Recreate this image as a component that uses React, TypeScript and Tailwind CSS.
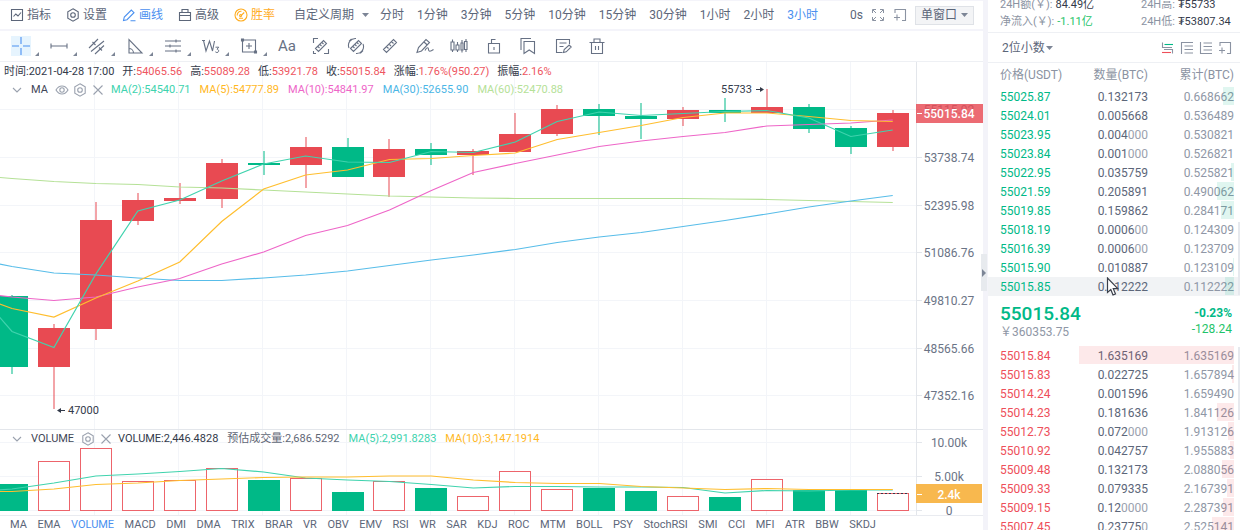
import { useState } from 'react'
import type { ReactNode } from 'react'
import clsx from 'clsx'

type Candle = {
  up: boolean
  top: number
  bottom: number
  high: number
  low: number
  vol: number
}

// [up, body top, body bottom, wick top, wick bottom, volume top]
const RAW: [number, number, number, number, number, number][] = [
  [0, 296, 367, 295, 374, 484],
  [1, 328, 367, 324, 409, 462],
  [1, 220, 329, 202, 340, 449],
  [1, 200, 221, 193, 225, 482],
  [1, 198, 201, 183, 204, 481],
  [1, 163, 199, 159, 208, 469],
  [0, 163, 165, 151, 175, 480],
  [1, 147, 165, 137, 188, 479],
  [0, 147, 177, 138, 177, 492],
  [1, 149, 177, 139, 197, 482],
  [0, 149, 155, 143, 165, 488],
  [1, 151, 155, 149, 175, 497],
  [1, 134, 152, 113, 152, 472],
  [1, 109, 134, 105, 136, 490],
  [0, 109, 116, 104, 135, 488],
  [0, 116, 119, 103, 139, 491],
  [1, 110, 119, 107, 126, 497],
  [0, 110, 113, 98, 122, 497],
  [1, 107, 113, 89, 113, 480],
  [0, 107, 129, 104, 133, 490],
  [0, 128, 147, 126, 154, 490],
  [1, 113, 147, 110, 151, 494],
]

const CANDLES: Candle[] = RAW.map(([up, top, bottom, high, low, vol]) => ({
  up: up === 1,
  top,
  bottom,
  high,
  low,
  vol,
}))

const STEP = 41.94
const FIRST_X = 12
const BODY = 32
const VOL_BASE = 510.5
const RED = '#e84a52'
const GREEN = '#00b987'

const centerOf = (i: number) => FIRST_X + i * STEP

// every series starts one bar before the visible range
const LINES: { color: string; ys: number[] }[] = [
  { color: '#b5e197', ys: [175, 178.5, 181.5, 183.5, 184.5, 187, 188, 190, 192, 194, 196, 197, 198, 198.5, 198.5, 198.5, 198.5, 198.5, 199, 199.5, 200.5, 201.5, 202.5] },
  { color: '#58bde9', ys: [258, 266.5, 273, 275, 278, 280.5, 280.5, 278, 275, 271, 265.5, 260, 255, 249.5, 242.5, 237, 232.5, 226.5, 220.5, 214, 207, 201, 195.5] },
  { color: '#ee66c8', ys: [292, 297, 300.5, 297, 287, 278.5, 264, 252, 235.5, 225.5, 210, 190.5, 172.5, 163.5, 155, 146.5, 141, 136.5, 132.5, 126, 124.5, 123, 120] },
  { color: '#ffbe2e', ys: [293, 308.5, 317, 298, 281, 262, 221.5, 189, 175, 170, 159.5, 158.5, 155.5, 153, 139.5, 132.5, 125.5, 117.5, 113, 113, 116.5, 120.5, 121.5] },
  { color: '#40d3ae', ys: [283, 331.5, 347.5, 274, 211, 200, 181, 164, 156, 162, 162.5, 151.5, 152.5, 142, 121.5, 112, 115.5, 113.5, 111.5, 110.5, 118, 136.5, 130] },
  { color: '#40d3ae', ys: [492, 489, 483, 476, 474, 471.5, 468.5, 472, 478, 480, 481.5, 484.5, 488, 486.5, 486.5, 487, 487, 487.5, 493, 490.5, 491, 490, 490] },
  { color: '#ffbe2e', ys: [491.5, 491.5, 489, 484.5, 483, 480.5, 479, 477.5, 477, 477, 476, 476, 480, 482.5, 483.5, 483.5, 486.5, 488, 489.5, 488.5, 489.5, 489.5, 489.5] },
]

const AXIS: [string, number][] = [
  ['55115.92', 110],
  ['53738.74', 158],
  ['52395.98', 206],
  ['51086.76', 253],
  ['49810.27', 301],
  ['48565.66', 349],
  ['47352.16', 396],
  ['10.00k', 443],
  ['5.00k', 477],
  ['0', 511],
]

const GRID_X = [94.5, 178.5, 262.5, 346.5, 430.5, 514.5, 598.5, 682.5, 766.5, 850.5]

const PERIODS = ['分时', '1分钟', '3分钟', '5分钟', '10分钟', '15分钟', '30分钟', '1小时', '2小时', '3小时']

const INDICATORS = [
  'MA', 'EMA', 'VOLUME', 'MACD', 'DMI', 'DMA', 'TRIX', 'BRAR', 'VR', 'OBV', 'EMV', 'RSI', 'WR', 'SAR',
  'KDJ', 'ROC', 'MTM', 'BOLL', 'PSY', 'StochRSI', 'SMI', 'CCI', 'MFI', 'ATR', 'BBW', 'SKDJ',
]

type Order = { price: string; qty: string; total: string; depth: number; hover?: boolean }

const ASKS: Order[] = [
  { price: '55025.87', qty: '0.132173', total: '0.668662', depth: 11 },
  { price: '55024.01', qty: '0.005668', total: '0.536489', depth: 0 },
  { price: '55023.95', qty: '0.004000', total: '0.530821', depth: 0 },
  { price: '55023.84', qty: '0.001000', total: '0.526821', depth: 0 },
  { price: '55022.95', qty: '0.035759', total: '0.525821', depth: 3 },
  { price: '55021.59', qty: '0.205891', total: '0.490062', depth: 17 },
  { price: '55019.85', qty: '0.159862', total: '0.284171', depth: 13 },
  { price: '55018.19', qty: '0.000600', total: '0.124309', depth: 0 },
  { price: '55016.39', qty: '0.000600', total: '0.123709', depth: 0 },
  { price: '55015.90', qty: '0.010887', total: '0.123109', depth: 1 },
  { price: '55015.85', qty: '0.112222', total: '0.112222', depth: 9, hover: true },
]

const BIDS: Order[] = [
  { price: '55015.84', qty: '1.635169', total: '1.635169', depth: 155 },
  { price: '55015.83', qty: '0.022725', total: '1.657894', depth: 2 },
  { price: '55014.24', qty: '0.001596', total: '1.659490', depth: 0 },
  { price: '55014.23', qty: '0.181636', total: '1.841126', depth: 17 },
  { price: '55012.73', qty: '0.072000', total: '1.913126', depth: 6 },
  { price: '55010.92', qty: '0.042757', total: '1.955883', depth: 4 },
  { price: '55009.48', qty: '0.132173', total: '2.088056', depth: 12 },
  { price: '55009.33', qty: '0.079335', total: '2.167391', depth: 7 },
  { price: '55009.15', qty: '0.120000', total: '2.287391', depth: 11 },
  { price: '55007.45', qty: '0.237750', total: '2.525141', depth: 22 },
]

function Icon({ size = 18, children }: { size?: number; children: ReactNode }) {
  return (
    <svg
      width={size}
      height={size}
      viewBox={`0 0 ${size} ${size}`}
      fill="none"
      stroke="currentColor"
      strokeWidth={1.1}
      className="shrink-0"
      aria-hidden
    >
      {children}
    </svg>
  )
}

const HEXAGON = 'M7 .8 12.2 3.8v6.4L7 13.2 1.8 10.2V3.8Z'

const MENU: { label: string; tone?: string; icon: ReactNode }[] = [
  { label: '指标', icon: <path d="M1.500 1.500h11v11h-11ZM3.500 8.500l2.300-2.500 2.200 2L11 4.500" /> },
  {
    label: '设置',
    icon: (
      <>
        <path d={HEXAGON} />
        <circle cx={7} cy={7} r={2.3} />
      </>
    ),
  },
  { label: '画线', tone: 'text-[#4a90f0]', icon: <path d="M1.500 12.500 2.300 9 9.300 2l2.700 2.700-7 7ZM8.500 12.700h5" /> },
  { label: '高级', icon: <path d="M1.500 4.500h11v8h-11ZM4 4.500v-3h6v3M1.500 7.500h11" /> },
  {
    label: '胜率',
    tone: 'text-[#ffac1f]',
    icon: (
      <>
        <circle cx={7} cy={7} r={6} />
        <path d="M3.200 7.500A3.800 3.800 0 0 1 7.500 3.300M7.300 7.300 10.200 4.500M5 10.300h4" />
        <circle cx={6.600} cy={7.600} r={1} />
      </>
    ),
  },
]

const SHAPES: { label: string; icon: ReactNode }[] = [
  { label: '十字', icon: <path d="M9 0v7M9 11v7M0 9h7M11 9h7" /> },
  { label: '线段', icon: <path d="M1 9h16M1 6.500v5M17 6.500v5" /> },
  { label: '平行线', icon: <path d="M1 11 10 2M3 14.500 16 4M7 17l9-8.500M4.500 5l3 3M11 10.500l3 3" /> },
  { label: '三角', icon: <path d="M3 2.500v13.500h13ZM3 11.500c2.500 0 4.500 2 4.500 4.500" /> },
  { label: '水平线', icon: <path d="M1 4h16M1 9h16M1 14h16M12 2.500v3M6 7.500v3M12 12.500v3" /> },
  {
    label: '波浪',
    icon: (
      <>
        <path d="M1.500 3.500l2.500 10.500 3.500-10 3 10 2-10M0 3.500h3" />
        <path d="M13.500 10.200h3.300l-1.800 2c2 0 2.500 3.300-.1 3.300-.8 0-1.300-.3-1.600-.8" strokeWidth={1} />
      </>
    ),
  },
  { label: '矩形', icon: <path d="M2.500 3h13v12h-13ZM9 6v6M6 9h6M1.500 2h2v2h-2ZM14.500 14h2v2h-2Z" /> },
]

const RULER = 'M3.500 11.500 11.500 3.500l3 3-8 8ZM6 9.500l1.500 1.500M8 7.500l1.500 1.500M10 5.500l1.500 1.500'

const TOOLS: { label: string; icon: ReactNode }[] = [
  { label: '测量', icon: <path d={`${RULER}M1.500 6V1.500H6M12 16.500h4.500V12M1.500 14v2.500H4`} /> },
  {
    label: '圆形测量',
    icon: <path d={`${RULER}M2 11C0 6 4 1 9 1.500M16 7c2 5-2 10-7 9.500M2 4.500 4.500 2M13.500 16l2.500-2.500`} />,
  },
  { label: '尺子', icon: <path d="M2.500 12.500 12.500 2.500l3 3-10 10ZM5.500 9.500l2 2M8 7l2 2M10.500 4.500l2 2" /> },
  { label: '画笔', icon: <path d="M1 15.500l1.500-5 7.500-8 3.500 3-8 8.500ZM8 5l3.300 3M9 13.500c2-4 3.500-3 3.500-1s1.500 2.500 5 0" /> },
  {
    label: 'K线',
    icon: (
      <path d="M1 5h3v8H1ZM2.500 2.500V5M2.500 13v2M6 8h3v5H6ZM7.500 5v3M7.500 13v2M11 6h2v7h-2ZM12 3v3M12 13v2.500M14.500 4.500h2.500v8h-2.500ZM16 2v2.500M16 12.500V15" />
    ),
  },
  { label: '锁定', icon: <path d="M3.500 6.500h11v9.500h-11ZM6.500 6.500v-4h4M9 10v3" /> },
  { label: '收藏', icon: <path d="M5 4.500h10.500v12L10.200 13 5 16.500ZM2 13V1.500h10" /> },
  { label: '笔记', icon: <path d="M15.500 7V2.500h-13v13h6M5.500 6h7M5.500 9.500h4M9.500 15.500l.7-3 5-4.500 2 2-5 4.800Z" /> },
  { label: '删除', icon: <path d="M1.500 5.500h15M3.500 5.500v11h11v-11M6 5V2h6v3M7.500 9v4M10.500 9v4" /> },
]

function Caret() {
  return (
    <svg width={7} height={4} viewBox="0 0 7 4" className="pointer-events-none shrink-0" aria-hidden>
      <path d="M0 0h7L3.500 4Z" fill="#7c8596" />
    </svg>
  )
}

function MenuBar() {
  const [period, setPeriod] = useState('3小时')

  return (
    <div className="flex h-[31px] items-center border-t border-b-2 border-[#f4f4fa] pr-[9px] pl-[10px] text-xs">
      <div className="flex gap-[15px]">
        {MENU.map((m) => (
          <button key={m.label} type="button" className={clsx('flex items-center gap-[3px]', m.tone)}>
            <Icon size={14}>{m.icon}</Icon>
            {m.label}
          </button>
        ))}
      </div>
      <label className="ml-[19px] flex items-center gap-[7px]">
        <select aria-label="周期" className="appearance-none outline-none">
          <option>自定义周期</option>
        </select>
        <Caret />
      </label>
      <div className="ml-[11px] flex gap-[13px]">
        {PERIODS.map((p) => (
          <button
            key={p}
            type="button"
            onClick={() => setPeriod(p)}
            className={clsx(p === period && 'text-[#4a90f0]')}
          >
            {p}
          </button>
        ))}
      </div>
      <div className="ml-auto flex items-center gap-2">
        <span>0s</span>
        <button type="button" aria-label="全屏" className="text-[#8b93a2]">
          <Icon size={14}>
            <path d="M1.500 5V1.500H5M2 2l3 3M9 1.500h3.500V5M12 2 9 5M1.500 9v3.500H5M2 12l3-3M12.500 9v3.500H9M12 12 9 9" strokeWidth={1} />
          </Icon>
        </button>
        <button type="button" aria-label="新窗口" className="text-[#8b93a2]">
          <Icon size={14}>
            <path d="M2 5V1.500h10.500v11H9M1 9.500h6M4 6.500v6" />
          </Icon>
        </button>
        <label className="flex h-[19px] items-center gap-[3px] border border-[#dfe2e7] bg-[#f3f4f6] px-[5px]">
          <select aria-label="窗口" className="appearance-none outline-none">
            <option>单窗口</option>
          </select>
          <Caret />
        </label>
      </div>
    </div>
  )
}

function DrawBar() {
  return (
    <div className="flex h-[31px] items-center border-b border-[#eef0f4] pl-[11px] text-[#677184]">
      {SHAPES.map((s, i) => (
        <button key={s.label} type="button" aria-label={s.label} className="flex w-[38px] items-end gap-1">
          <span
            className={clsx(
              'flex size-5 items-center justify-center',
              i === 0 && 'bg-[#e6f4fe] text-[#4a90f0]',
            )}
          >
            <Icon>{s.icon}</Icon>
          </span>
          <svg width={4} height={4} viewBox="0 0 4 4" aria-hidden>
            <path d="M4 0v4H0Z" fill="#7c8596" />
          </svg>
        </button>
      ))}
      <div className="flex w-[330px] items-center justify-between">
        <button type="button" className="w-5 text-center text-[15px]">
          Aa
        </button>
        {TOOLS.map((t) => (
          <button key={t.label} type="button" aria-label={t.label} className="flex size-5 items-center justify-center">
            <Icon>{t.icon}</Icon>
          </button>
        ))}
      </div>
    </div>
  )
}

function LegendButtons({ name, eye = false }: { name: string; eye?: boolean }) {
  return (
    <div className={clsx('flex items-center text-[#9aa1ae]', eye ? 'w-[91px]' : 'w-[98px]')}>
      <button type="button" aria-label="收起" className="mr-2">
        <Icon size={12}>
          <path d="M2 4l4 4 4-4" />
        </Icon>
      </button>
      <span className="mr-[7px] text-[#3f4656]">{name}</span>
      {eye && (
        <button type="button" aria-label="显示" className="mr-1">
          <Icon size={14}>
            <path d="M1 7c3-5.300 9-5.300 12 0-3 5.300-9 5.300-12 0Z" />
            <circle cx={7} cy={7} r={2.2} />
          </Icon>
        </button>
      )}
      <button type="button" aria-label="设置" className="mr-1">
        <Icon size={14}>
          <path d={HEXAGON} />
          <circle cx={7} cy={7} r={2.3} />
        </Icon>
      </button>
      <button type="button" aria-label="关闭">
        <Icon size={14}>
          <path d="M2.500 2.500l9 9M11.500 2.500l-9 9" />
        </Icon>
      </button>
    </div>
  )
}

function Quote({ label, value }: { label: string; value: string }) {
  return (
    <span>
      {label}:<span className="text-[#ee5560]">{value}</span>
    </span>
  )
}

function PriceLegend() {
  return (
    <div className="absolute inset-x-0 top-0 pt-px text-[11px] whitespace-nowrap text-[#333a4a]">
      <div className="flex h-[18px] items-center gap-2 pl-1">
        <span>时间:2021-04-28 17:00</span>
        <Quote label="开" value="54065.56" />
        <Quote label="高" value="55089.28" />
        <Quote label="低" value="53921.78" />
        <Quote label="收" value="55015.84" />
        <Quote label="涨幅" value="1.76%(950.27)" />
        <Quote label="振幅" value="2.16%" />
      </div>
      <div className="flex h-[18px] items-center gap-[9px] pl-[11px]">
        <LegendButtons name="MA" eye />
        <span className="text-[#40d3ae]">MA(2):54540.71</span>
        <span className="text-[#ffb81f]">MA(5):54777.89</span>
        <span className="text-[#ee66c8]">MA(10):54841.97</span>
        <span className="text-[#4bb6e6]">MA(30):52655.90</span>
        <span className="text-[#b5e197]">MA(60):52470.88</span>
      </div>
    </div>
  )
}

function VolumeLegend() {
  return (
    <div className="absolute inset-x-0 top-[368px] flex h-[18px] items-center gap-[9px] pl-[11px] text-[11px] whitespace-nowrap text-[#333a4a]">
      <LegendButtons name="VOLUME" />
      <span>VOLUME:2,446.4828</span>
      <span className="text-[#5f6776]">预估成交量:2,686.5292</span>
      <span className="text-[#40d3ae]">MA(5):2,991.8283</span>
      <span className="text-[#ffb81f]">MA(10):3,147.1914</span>
    </div>
  )
}

function Chart() {
  return (
    <svg
      viewBox="0 62 983 453"
      preserveAspectRatio="xMaxYMin slice"
      className="block h-[453px] w-full text-xs"
      role="img"
      aria-label="K线图"
    >
      <g stroke="#f3f5f9">
        {GRID_X.map((x) => (
          <line key={x} x1={x} x2={x} y1={62} y2={515} />
        ))}
        {AXIS.map(([label, y]) => (
          <line key={label} x1={0} x2={916} y1={y - 0.5} y2={y - 0.5} />
        ))}
      </g>
      <g stroke="#e3e6eb">
        <path d="M0 429.500h983M916.500 62v453" />
        {AXIS.map(([label, y]) => (
          <line key={label} x1={917} x2={922} y1={y - 0.5} y2={y - 0.5} />
        ))}
      </g>

      {CANDLES.map((c, i) => {
        const color = c.up ? RED : GREEN
        const x = Math.round(centerOf(i) - BODY / 2)
        return (
          <g key={i}>
            <rect x={x + 15.5} y={c.high} width={1} height={c.low - c.high} fill={color} />
            <rect x={x} y={c.top} width={BODY} height={c.bottom - c.top} fill={color} />
            {c.up ? (
              <rect
                x={x + 0.5}
                y={c.vol - 0.5}
                width={BODY - 1}
                height={VOL_BASE - c.vol + 0.5}
                fill="#fff"
                stroke="#ed646b"
              />
            ) : (
              <rect x={x} y={c.vol} width={BODY} height={VOL_BASE - c.vol + 0.5} fill={color} />
            )}
          </g>
        )
      })}
      <path d="M877 493.500h31" stroke="#333a4a" strokeDasharray="2 2" />

      {LINES.map((line, n) => (
        <polyline
          key={n}
          points={line.ys.map((y, i) => `${centerOf(i - 1)},${y}`).join(' ')}
          fill="none"
          stroke={line.color}
          strokeWidth={1.2}
        />
      ))}

      <g fill="#333a4a" className="text-[11px]">
        <text x={752} y={93} textAnchor="end">
          55733
        </text>
        <text x={68} y={414}>
          47000
        </text>
      </g>
      <g stroke="#333a4a" fill="#333a4a">
        <path d="M756 89.500h5" />
        <path d="M760 87v5l4-2.500Z" stroke="none" />
        <path d="M60 410.500h5" />
        <path d="M61 408v5l-4-2.500Z" stroke="none" />
      </g>

      <g fill="#6b7486" textAnchor="middle">
        {AXIS.map(([label, y]) => (
          <text key={label} x={949} y={y + 4}>
            {label}
          </text>
        ))}
      </g>
      <rect x={916} y={104} width={67} height={19} fill="#e84a54" opacity={0.82} />
      <rect x={916} y={484} width={66} height={19} fill="#f8b84e" />
      <path d="M917 113.500h5M917 494.500h5" stroke="#fff" />
      <g fill="#fff" textAnchor="middle" className="font-medium">
        <text x={949} y={118}>
          55015.84
        </text>
        <text x={949} y={499}>
          2.4k
        </text>
      </g>
    </svg>
  )
}

function IndicatorTabs() {
  const [active, setActive] = useState('VOLUME')

  return (
    <div className="border-t border-[#e9ebf0] px-[10px]">
      <div className="flex h-[19px] max-w-[866px] items-center justify-between text-[11px]">
        {INDICATORS.map((name) => (
          <button
            key={name}
            type="button"
            onClick={() => setActive(name)}
            className={clsx(name === active && 'text-[#4a90f0]')}
          >
            {name}
          </button>
        ))}
      </div>
    </div>
  )
}

function Quantity({ value }: { value: string }) {
  const head = value.replace(/0+$/, '')
  return (
    <>
      {head}
      <span className="text-[#9aa1ae]">{value.slice(head.length)}</span>
    </>
  )
}

function OrderTable({ label, orders, side, header = false }: {
  label: string
  orders: Order[]
  side: 'ask' | 'bid'
  header?: boolean
}) {
  return (
    <table aria-label={label} className="w-full table-fixed">
      <colgroup>
        <col className="w-[80px]" />
        <col className="w-[80px]" />
        <col />
      </colgroup>
      {header && (
        <thead className="text-[#8b93a2]">
          <tr className="h-6">
            <th className="pl-3 text-left font-normal whitespace-nowrap">价格(USDT)</th>
            <th className="text-right font-normal">数量(BTC)</th>
            <th className="pr-[6px] text-right font-normal">累计(BTC)</th>
          </tr>
        </thead>
      )}
      <tbody>
        {orders.map((o) => (
          <tr key={o.price} className={clsx('relative h-[19px]', o.hover && 'bg-[#f1f3f5]')}>
            <td className={clsx('pl-3', side === 'ask' ? 'text-[#00b987]' : 'text-[#ee4f5a]')}>{o.price}</td>
            <td className="text-right text-[#5c6679]">
              <Quantity value={o.qty} />
            </td>
            <td className="pr-[6px] text-right text-[#8f97a6]">
              {o.total}
              <span
                className={clsx(
                  'absolute top-0 right-[6px] h-[18px]',
                  side === 'ask' ? 'bg-[#00b987]/12' : 'bg-[#f04a54]/12',
                )}
                style={{ width: o.depth }}
              />
            </td>
          </tr>
        ))}
      </tbody>
    </table>
  )
}

function Stat({ label, value, tone = 'text-[#333a4a]' }: { label: string; value: string; tone?: string }) {
  return (
    <div className="flex gap-[3px]">
      <dt className="text-[#8b93a2]">{label}:</dt>
      <dd className={tone}>{value}</dd>
    </div>
  )
}

function OrderBook() {
  return (
    <aside className="relative w-[252px] shrink-0 text-xs leading-4">
      <div className="h-[33px] overflow-hidden border-b border-[#eef0f4] text-[11px] leading-[17px]">
        <dl className="-mt-1 grid grid-cols-[141px_1fr] pl-3 whitespace-nowrap">
          <Stat label="24H额(￥)" value="84.49亿" />
          <Stat label="24H高" value="₮55733" />
          <Stat label="净流入(￥)" value="-1.11亿" tone="text-[#1fc46a]" />
          <Stat label="24H低" value="₮53807.34" />
        </dl>
      </div>
      <div className="flex h-[30px] items-center justify-between border-b border-[#eef0f4] pr-2 pl-[14px]">
        <label className="flex items-center gap-px">
          <select aria-label="小数位" className="appearance-none outline-none">
            <option>2位小数</option>
          </select>
          <Caret />
        </label>
        <div className="flex gap-[5px] text-[#8b93a2]">
          <button type="button" aria-label="买卖盘">
            <Icon size={14}>
              <path d="M1.500 1.500v5H11M3 8.500h8.500v4" />
              <path d="M3.500 3.500H12" stroke="#00b987" />
              <path d="M1 11.500h9" stroke="#ee4f5a" />
            </Icon>
          </button>
          <button type="button" aria-label="买盘">
            <Icon size={14}>
              <path d="M1.500 13V1.500H13M4.500 5H13M4.500 8.500H13M4.500 12H13" />
            </Icon>
          </button>
          <button type="button" aria-label="卖盘">
            <Icon size={14}>
              <path d="M1.500 1v11.500H13M4.500 2H13M4.500 5.500H13M4.500 9H13" />
            </Icon>
          </button>
          <button type="button" aria-label="新窗口">
            <Icon size={14}>
              <path d="M2 5V1.500h10.500v11H9M1 9.500h6M4 6.500v6" />
            </Icon>
          </button>
        </div>
      </div>

      <OrderTable label="卖单" orders={ASKS} side="ask" header />
      <div className="flex h-[50px] items-center justify-between pr-2 pl-3">
        <div className="pt-px">
          <p className="text-[19px] leading-5 font-medium text-[#00b987]">55015.84</p>
          <p className="text-[#8f97a6]">￥360353.75</p>
        </div>
        <div className="text-right text-[#1fc46a]">
          <p className="font-bold text-[#00b987]">-0.23%</p>
          <p>-128.24</p>
        </div>
      </div>
      <OrderTable label="买单" orders={BIDS} side="bid" />

      <span className="absolute top-[222px] right-0 h-[73px] w-[2px] bg-[#e6e9ee]" />
      <span className="absolute top-[347px] right-0 h-[73px] w-[2px] bg-[#e6e9ee]" />
      <svg width={14} height={20} viewBox="0 0 14 20" className="absolute top-[277px] left-[118px]" aria-hidden>
        <path d="M1.500 1v14.500l3.300-3 2.200 5.500 2.500-1-2.200-5.300h4.500Z" fill="#fff" stroke="#3a3f4a" strokeWidth={1.2} />
      </svg>
    </aside>
  )
}

export default function App() {
  return (
    <div className="flex h-screen overflow-hidden bg-white font-[Roboto,'Noto_Sans_CJK_SC',sans-serif] text-[#5c6679]">
      <main className="min-w-0 flex-1">
        <MenuBar />
        <DrawBar />
        <div className="relative">
          <Chart />
          <PriceLegend />
          <VolumeLegend />
        </div>
        <IndicatorTabs />
      </main>
      <div className="relative w-[5px] shrink-0 bg-[#f3f3f9]">
        <button
          type="button"
          aria-label="收起面板"
          className="absolute top-[254px] right-px flex h-[37px] w-[6px] items-center justify-center bg-[#e7eaee]"
        >
          <svg width={4} height={8} viewBox="0 0 4 8" aria-hidden>
            <path d="M0 0v8l4-4Z" fill="#7c8596" />
          </svg>
        </button>
      </div>
      <OrderBook />
    </div>
  )
}
